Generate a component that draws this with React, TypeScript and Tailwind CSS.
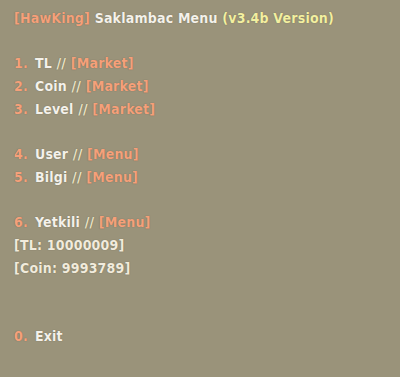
const lines: { num?: string; label?: string; tag?: string; plain?: string }[] = [
  { num: '1.', label: 'TL', tag: '[Market]' },
  { num: '2.', label: 'Coin', tag: '[Market]' },
  { num: '3.', label: 'Level', tag: '[Market]' },
  {},
  { num: '4.', label: 'User', tag: '[Menu]' },
  { num: '5.', label: 'Bilgi', tag: '[Menu]' },
  {},
  { num: '6.', label: 'Yetkili', tag: '[Menu]' },
  { plain: '[TL: 10000009]' },
  { plain: '[Coin: 9993789]' },
  {},
  {},
  { num: '0.', label: 'Exit' },
]

export default function App() {
  return (
    <div className="w-[400px] h-[377px] bg-[#9a937a] px-[14px] pt-[7px] font-['DejaVu_Sans_Condensed','DejaVu_Sans',sans-serif] text-[14px] font-bold tracking-[0.2px] leading-[22.7px] [text-shadow:0_0_1px_rgba(60,55,40,0.5)]">
      <div>
        <span className="text-[#f5a07a]">[HawKing]</span>{' '}
        <span className="text-[#f4f1ea]">Saklambac Menu</span>{' '}
        <span className="text-[#f2efa0]">(v3.4b Version)</span>
      </div>
      <div className="h-[22.7px]" />
      {lines.map((l, i) => {
        if (l.plain) {
          return (
            <div key={i} className="text-[#f1ebdc]">
              {l.plain}
            </div>
          )
        }
        if (!l.num) return <div key={i} className="h-[22.7px]" />
        return (
          <div key={i} className="flex gap-[7px]">
            <span className="text-[#f5a07a]">{l.num}</span>
            <span>
              <span className="text-[#f4f1ea]">{l.label}</span>
              {l.tag && (
                <>
                  <span className="text-[#ece5c8]"> // </span>
                  <span className="text-[#f5a07a]">{l.tag}</span>
                </>
              )}
            </span>
          </div>
        )
      })}
    </div>
  )
}
